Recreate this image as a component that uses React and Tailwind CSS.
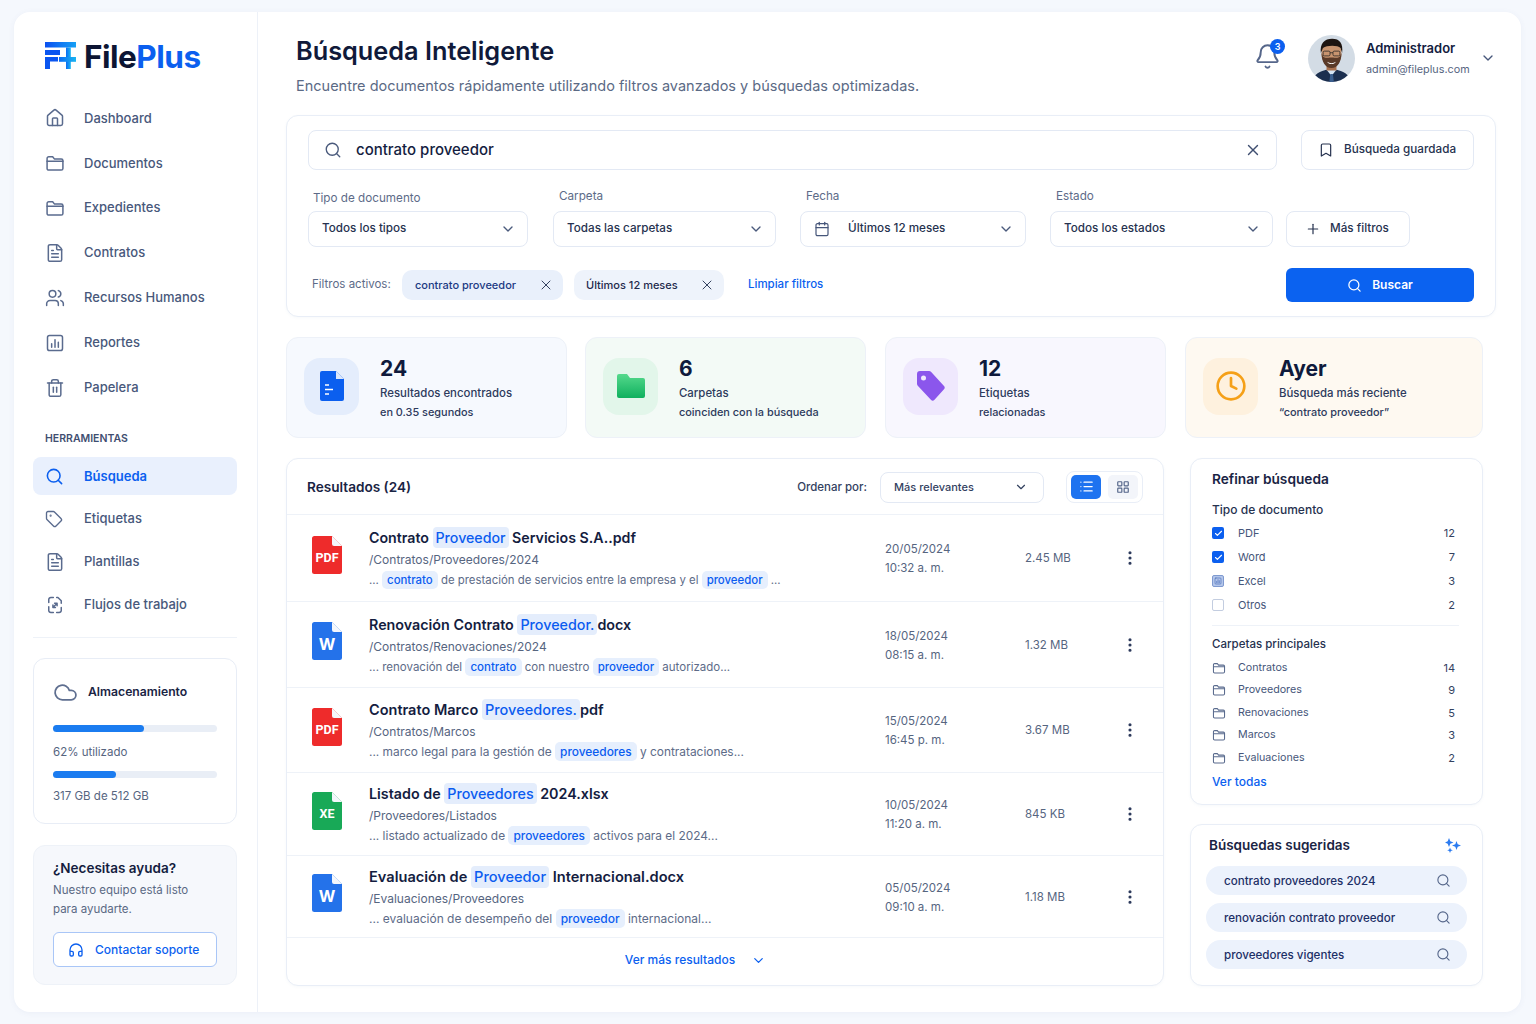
import React from 'react';
import {
  Home, FileText, Users, Trash2, Search, Tag, X, Bookmark, ChevronDown, Calendar,
  Plus, Bell, Cloud, Headphones, List, LayoutGrid, MoreVertical, Clock, Check
} from 'lucide-react';

const FolderIcon = ({ size = 20, className = '' }) => (
  <svg width={size} height={size} viewBox="0 0 24 24" fill="none" stroke="currentColor" strokeWidth="1.8" strokeLinejoin="round" strokeLinecap="round" className={className}>
    <path d="M2.5 6.5a2 2 0 0 1 2-2h4.7l2 2.6h8.3a2 2 0 0 1 2 2v9.4a2 2 0 0 1-2 2h-15a2 2 0 0 1-2-2z" />
    <path d="M2.5 10h19" />
  </svg>
);

const ReportIcon = ({ size = 20, className = '' }) => (
  <svg width={size} height={size} viewBox="0 0 24 24" fill="none" stroke="currentColor" strokeWidth="1.8" strokeLinecap="round" className={className}>
    <rect x="3" y="3" width="18" height="18" rx="2.5" />
    <path d="M8 17v-4M12 17V8M16 17v-6" />
  </svg>
);

const FlowIcon = ({ size = 20, className = '' }) => (
  <svg width={size} height={size} viewBox="0 0 24 24" fill="none" stroke="currentColor" strokeWidth="1.8" strokeLinecap="round" strokeLinejoin="round" className={className}>
    <path d="M10 3H7a2.5 2.5 0 0 0-2.5 2.5V9M4.5 14v4.5A2.5 2.5 0 0 0 7 21h3M14 21h3a2.5 2.5 0 0 0 2.5-2.5V15M19.5 10V7L15.5 3H14" />
    <path d="M9.5 15l5-5M11.5 10h3v3M9.5 12v3h3" />
  </svg>
);

const Logo = () => (
  <svg width="32" height="27" viewBox="0 0 32 27">
    <defs>
      <linearGradient id="lg1" x1="0" y1="0" x2="1" y2="0">
        <stop offset="0" stopColor="#0a4ff0" />
        <stop offset="1" stopColor="#16a0f5" />
      </linearGradient>
      <linearGradient id="lg2" x1="0" y1="0" x2="1" y2="0">
        <stop offset="0" stopColor="#0b6cf2" />
        <stop offset="1" stopColor="#19b5f2" />
      </linearGradient>
    </defs>
    <rect x="0" y="0" width="31" height="5.5" fill="url(#lg1)" />
    <rect x="0" y="8" width="15" height="5" fill="#0a55f0" />
    <rect x="0" y="15" width="13" height="4.5" fill="#0a55f0" />
    <rect x="0" y="15" width="5" height="12" fill="#0a55f0" />
    <rect x="21" y="5.5" width="4.8" height="21.5" fill="url(#lg2)" />
    <rect x="14" y="15" width="17" height="4.8" fill="url(#lg2)" />
  </svg>
);

const Avatar = () => (
  <svg width="47" height="47" viewBox="0 0 47 47" className="rounded-full shrink-0">
    <rect width="47" height="47" fill="#d3dce5" />
    <path d="M4 47c1-8 9-11 15-12.5h9C34 36 42 39 43 47z" fill="#1c2f4f" />
    <path d="M18 34l5.5 7 5.5-7-1-3h-9z" fill="#d6e5f3" />
    <path d="M22.3 39h2.6l1 8h-4.6z" fill="#3b5f8f" />
    <g transform="translate(23.5 18) scale(1.25) translate(-23.5 -19)">
      <rect x="19.5" y="26" width="8" height="7" fill="#a8714f" />
      <ellipse cx="23.5" cy="19.5" rx="8" ry="10" fill="#c8946f" />
      <path d="M15.5 19c0 7 3 12 8 12s8-5 8-12l-1.5 3c-2 1.5-3 .5-6.5 .5s-4.5 1-6.5-.5z" fill="#5a3a28" />
      <path d="M15 19c-1-8 3-11.5 9-11.5s9 3.5 8 11.5l-1.3-4c-2-2.5-11-2.5-14 0z" fill="#1e1511" />
      <path d="M20 26c2 1.5 5 1.5 7 0-1 2.5-6 2.5-7 0z" fill="#fff" />
      <g fill="none" stroke="#222" strokeWidth=".6">
        <rect x="16.8" y="17.5" width="5.5" height="3.8" rx="1" />
        <rect x="24.7" y="17.5" width="5.5" height="3.8" rx="1" />
        <path d="M22.3 18.8h2.4" />
      </g>
    </g>
  </svg>
);

const FileIcon = ({ color, label, small }) => (
  <div className="relative w-[30px] h-[38px] shrink-0 mb-[7px]">
    <svg width="30" height="38" viewBox="0 0 30 38" className="block">
      <path d="M2.5 0H20l10 10v25.5a2.5 2.5 0 0 1-2.5 2.5h-25A2.5 2.5 0 0 1 0 35.5v-33A2.5 2.5 0 0 1 2.5 0z" fill={color} />
      <path d="M20 0l10 10h-8a2 2 0 0 1-2-2z" fill="#f4f7fc" />
    </svg>
    <span className={`absolute left-0 right-0 top-[13px] text-center text-white font-bold leading-[18px] ${small ? 'text-[12.5px] font-[Roboto,sans-serif]' : 'text-[16px]'}`}>{label}</span>
  </div>
);

const navTop = [
  { label: 'Dashboard', icon: <Home size={20} strokeWidth={1.8} /> },
  { label: 'Documentos', icon: <FolderIcon /> },
  { label: 'Expedientes', icon: <FolderIcon /> },
  { label: 'Contratos', icon: <FileText size={20} strokeWidth={1.8} /> },
  { label: 'Recursos Humanos', icon: <Users size={20} strokeWidth={1.8} /> },
  { label: 'Reportes', icon: <ReportIcon /> },
  { label: 'Papelera', icon: <Trash2 size={20} strokeWidth={1.8} /> },
];

const navTools = [
  { label: 'Etiquetas', icon: <Tag size={18} strokeWidth={1.8} /> },
  { label: 'Plantillas', icon: <FileText size={20} strokeWidth={1.8} /> },
  { label: 'Flujos de trabajo', icon: <FlowIcon /> },
];

const results = [
  {
    h: 'h-[87px]', color: '#ee2b2b', label: 'PDF', small: true, titleSize: 'text-[14.2px]', snipSize: 'text-[11.4px]',
    title: ['Contrato ', 'Proveedor', ' Servicios S.A..pdf'],
    path: '/Contratos/Proveedores/2024',
    snippet: ['... ', 'contrato', ' de prestación de servicios entre la empresa y el ', 'proveedor', ' ...'],
    date: '20/05/2024', time: '10:32 a. m.', size: '2.45 MB',
  },
  {
    h: 'h-[86px]', color: '#2472ea', label: 'W', titleSize: 'text-[14.3px]', snipSize: 'text-[11.5px]',
    title: ['Renovación Contrato ', 'Proveedor.', 'docx'],
    path: '/Contratos/Renovaciones/2024',
    snippet: ['... renovación del ', 'contrato', ' con nuestro ', 'proveedor', ' autorizado...'],
    date: '18/05/2024', time: '08:15 a. m.', size: '1.32 MB',
  },
  {
    h: 'h-[85px]', color: '#ee2b2b', label: 'PDF', small: true, titleSize: 'text-[14.5px]', snipSize: 'text-[11.9px]',
    title: ['Contrato Marco ', 'Proveedores.', 'pdf'],
    path: '/Contratos/Marcos',
    snippet: ['... marco legal para la gestión de ', 'proveedores', ' y contrataciones...'],
    date: '15/05/2024', time: '16:45 p. m.', size: '3.67 MB',
  },
  {
    h: 'h-[83px]', color: '#18a957', label: 'XE', small: true, titleSize: 'text-[14.3px]', snipSize: 'text-[11.9px]',
    title: ['Listado de ', 'Proveedores', ' 2024.xlsx'],
    path: '/Proveedores/Listados',
    snippet: ['... listado actualizado de ', 'proveedores', ' activos para el 2024...'],
    date: '10/05/2024', time: '11:20 a. m.', size: '845 KB',
  },
  {
    h: 'h-[82px]', color: '#2472ea', label: 'W', titleSize: 'text-[14.6px]', snipSize: 'text-[12px]',
    title: ['Evaluación de ', 'Proveedor', ' Internacional.docx'],
    path: '/Evaluaciones/Proveedores',
    snippet: ['... evaluación de desempeño del ', 'proveedor', ' internacional...'],
    date: '05/05/2024', time: '09:10 a. m.', size: '1.18 MB',
  },
];

const docTypes = [
  { label: 'PDF', count: 12, state: 'on' },
  { label: 'Word', count: 7, state: 'on' },
  { label: 'Excel', count: 3, state: 'mixed' },
  { label: 'Otros', count: 2, state: 'off' },
];

const folders = [
  { label: 'Contratos', count: 14 },
  { label: 'Proveedores', count: 9 },
  { label: 'Renovaciones', count: 5 },
  { label: 'Marcos', count: 3 },
  { label: 'Evaluaciones', count: 2 },
];

const suggested = ['contrato proveedores 2024', 'renovación contrato proveedor', 'proveedores vigentes'];

const Select = ({ label, value, width, labelClass = '', icon }) => (
  <div className={`${width} shrink-0`}>
    <div className={`text-[11.7px] leading-4 text-[#5d6b88] ${labelClass}`}>{label}</div>
    <div className="h-[36px] border border-[#e3e9f4] rounded-lg bg-white flex items-center pl-[13px] pr-[11px] text-[11.7px] font-medium text-[#26324f]">
      {icon}
      <span className="flex-1">{value}</span>
      <ChevronDown size={16} className="text-[#4a5a7c]" />
    </div>
  </div>
);

const StatCard = ({ bg, iconBg, icon, value, line1, line2, width }) => (
  <div className={`${width} shrink-0 h-[101px] rounded-xl border border-[#edf1f8] ${bg} flex items-center pl-[17px]`}>
    <div className={`w-[55px] h-[57px] -mt-[3px] rounded-2xl ${iconBg} flex items-center justify-center shrink-0`}>{icon}</div>
    <div className="ml-[21px] mt-[3px]">
      <div className="text-[21px] leading-[26px] font-bold text-[#0f1a3c]">{value}</div>
      <div className="text-[11.4px] leading-[19px] mt-[2px] font-medium text-[#2d3a5c]">{line1}</div>
      <div className="text-[10.9px] leading-[19px] font-medium text-[#2d3a5c]">{line2}</div>
    </div>
  </div>
);

const Snippet = ({ parts, size }) => (
  <div className={`${size} leading-5 text-[#5d6b88] whitespace-pre`}>
    {parts.map((p, i) => i % 2 === 1
      ? <span key={i} className="bg-[#e6effd] text-[#0b5cf0] font-medium rounded-[5px] px-[5px] py-[2px]">{p}</span>
      : <span key={i}>{p}</span>)}
  </div>
);

export default function App() {
  return (
    <div className="h-[1024px] w-[1536px] overflow-hidden bg-[#f5f8fd] pl-[14px] pr-[15px] pt-[12px] pb-[12px] font-[Inter,sans-serif]">
      <div className="h-[1000px] bg-white rounded-2xl flex shadow-[0_1px_6px_rgba(60,90,150,0.06)]">
        {/* Sidebar */}
        <aside className="w-[244px] shrink-0 border-r border-[#edf1f8] pl-[19px] pr-[20px] pt-[30px]">
          <div className="flex items-center h-[27px] pl-[12px] gap-[7px]">
            <Logo />
            <div className="text-[31.5px] leading-none font-bold tracking-[-0.5px] text-[#0d1533] mt-[2px]">
              File<span className="text-[#0b5fef]">Plus</span>
            </div>
          </div>
          <nav className="mt-[27px]">
            {navTop.map((n) => (
              <div key={n.label} className="h-[44.9px] flex items-center pl-[12px] text-[13px] font-medium text-[#48587b]">
                <span className="w-[39px] text-[#5a6b8e]">{n.icon}</span>
                {n.label}
              </div>
            ))}
          </nav>
          <div className="mt-[21px] pl-[12px] text-[10.5px] leading-4 font-semibold text-[#3f4e70]">HERRAMIENTAS</div>
          <div className="mt-[10px] h-[38px] rounded-lg bg-[#e9f0fd] flex items-center pl-[12px] text-[13px] font-semibold text-[#0b5fef]">
            <span className="w-[39px]"><Search size={19} strokeWidth={2} /></span>
            <span className="mt-[1px]">Búsqueda</span>
          </div>
          <div className="mt-[2px]">
            {navTools.map((n) => (
              <div key={n.label} className="h-[43px] flex items-center pl-[12px] text-[13px] font-medium text-[#48587b]">
                <span className="w-[39px] text-[#5a6b8e]">{n.icon}</span>
                {n.label}
              </div>
            ))}
          </div>
          <div className="mt-[11px] border-t border-[#eef2f8]" />

          <div className="mt-[20px] h-[166px] rounded-xl border border-[#e8edf6] px-[19px] pt-[23px]">
            <div className="flex items-center h-[20px]">
              <Cloud size={25} strokeWidth={1.7} className="text-[#5f6f90]" />
              <span className="ml-[10px] text-[12.2px] font-semibold text-[#1a2444]">Almacenamiento</span>
            </div>
            <div className="mt-[23px] h-[7px] rounded-full bg-[#e9eef6]">
              <div className="h-[7px] w-[91px] rounded-full bg-[#1b7cf0]" />
            </div>
            <div className="mt-[12px] text-[11.5px] leading-4 text-[#56657f]">62% utilizado</div>
            <div className="mt-[11px] h-[7px] rounded-full bg-[#e9eef6]">
              <div className="h-[7px] w-[63px] rounded-full bg-[#1b7cf0]" />
            </div>
            <div className="mt-[10px] text-[11.5px] leading-4 text-[#56657f]">317 GB de 512 GB</div>
          </div>

          <div className="mt-[21px] h-[140px] rounded-xl border border-[#eef2f8] bg-[#f6f8fc] px-[19px] pt-[13px]">
            <div className="text-[13.5px] leading-[18px] font-semibold text-[#141d3f]">¿Necesitas ayuda?</div>
            <div className="mt-[4px] text-[11.5px] leading-[19px] text-[#5a6984]">Nuestro equipo está listo<br />para ayudarte.</div>
            <div className="mt-[13px] h-[35px] rounded-md border border-[#a9c6f7] bg-white flex items-center pl-[14px] text-[12px] font-medium text-[#0b5fef]">
              <Headphones size={16} strokeWidth={2} />
              <span className="ml-[11px]">Contactar soporte</span>
            </div>
          </div>
        </aside>

        {/* Main */}
        <main className="flex-1 min-w-0 pl-[28px] pr-[25px]">
          <header className="h-[103px] flex">
            <div className="pl-[10px] pt-[23px]">
              <h1 className="text-[25.3px] leading-8 font-semibold text-[#101a3a]">Búsqueda Inteligente</h1>
              <p className="mt-[9px] text-[14.5px] leading-5 text-[#5b6a85]">Encuentre documentos rápidamente utilizando filtros avanzados y búsquedas optimizadas.</p>
            </div>
            <div className="ml-auto flex items-start pt-[23px]">
              <div className="relative mt-[8px] mr-[27px] text-[#55668a]">
                <Bell size={27} strokeWidth={1.7} />
                <span className="absolute -top-[4px] left-[16px] w-[15px] h-[15px] rounded-full bg-[#0b5fef] text-white text-[9px] font-semibold flex items-center justify-center">3</span>
              </div>
              <Avatar />
              <div className="ml-[11px] w-[112px]">
                <div className="text-[13px] leading-4 mt-[5px] font-semibold text-[#141d3f]">Administrador</div>
                <div className="text-[10.8px] leading-4 mt-[6px] text-[#56657f]">admin@fileplus.com</div>
              </div>
              <ChevronDown size={16} className="ml-[2px] mt-[15px] text-[#46567a]" />
            </div>
          </header>

          {/* Search panel */}
          <section className="h-[202px] rounded-xl border border-[#e9eef7] bg-white px-[21px] pt-[14px] shadow-[0_1px_3px_rgba(60,90,150,0.04)]">
            <div className="flex gap-[24px]">
              <div className="w-[969px] h-[40px] border border-[#e3e9f4] rounded-lg flex items-center pl-[15px] pr-[14px]">
                <Search size={18} strokeWidth={1.8} className="text-[#4a5a7c]" />
                <span className="ml-[14px] flex-1 text-[15px] font-medium text-[#141d3f]">contrato proveedor</span>
                <X size={18} strokeWidth={1.8} className="text-[#3f4e70]" />
              </div>
              <div className="w-[173px] h-[40px] border border-[#e3e9f4] rounded-lg flex items-center pl-[16px] text-[11.7px] font-medium text-[#26324f]">
                <Bookmark size={16} strokeWidth={1.8} />
                <span className="ml-[10px]">Búsqueda guardada</span>
              </div>
            </div>
            <div className="flex items-end mt-[18px]">
              <Select width="w-[220px]" label="Tipo de documento" value="Todos los tipos" labelClass="mb-[5px] pl-[5px]" />
              <Select width="w-[223px] ml-[25px]" label="Carpeta" value="Todas las carpetas" labelClass="mb-[7px] pl-[6px]" />
              <Select
                width="w-[226px] ml-[24px]"
                label="Fecha"
                value="Últimos 12 meses"
                labelClass="mb-[7px] pl-[6px]"
                icon={<Calendar size={16} strokeWidth={1.8} className="text-[#46567a] mr-[18px]" />}
              />
              <Select width="w-[223px] ml-[24px]" label="Estado" value="Todos los estados" labelClass="mb-[7px] pl-[6px]" />
              <div className="w-[124px] h-[36px] ml-[13px] border border-[#e3e9f4] rounded-lg flex items-center pl-[18px] text-[11.7px] font-medium text-[#26324f]">
                <Plus size={16} strokeWidth={1.8} />
                <span className="ml-[9px]">Más filtros</span>
              </div>
            </div>
            <div className="flex items-center mt-[21px]">
              <span className="pl-[4px] w-[94px] text-[11.5px] text-[#5d6b88]">Filtros activos:</span>
              <div className="w-[161px] h-[30px] rounded-[10px] bg-[#e9f0fb] flex items-center pl-[13px] pr-[9px] text-[11px] font-medium text-[#1c3a83]">
                <span className="flex-1">contrato proveedor</span>
                <X size={16} strokeWidth={1.5} className="text-[#33415f]" />
              </div>
              <div className="w-[150px] h-[30px] ml-[11px] rounded-[10px] bg-[#eef3fb] flex items-center pl-[12px] pr-[9px] text-[11px] font-medium text-[#1e2a4c]">
                <span className="flex-1">Últimos 12 meses</span>
                <X size={16} strokeWidth={1.5} className="text-[#33415f]" />
              </div>
              <span className="ml-[24px] text-[11.5px] font-medium text-[#0b5fef]">Limpiar filtros</span>
              <div className="ml-auto w-[188px] h-[34px] rounded-md bg-[#0b62f0] text-white flex items-center justify-center text-[12px] font-semibold">
                <Search size={15} strokeWidth={2} />
                <span className="ml-[10px]">Buscar</span>
              </div>
            </div>
          </section>

          {/* Stat cards */}
          <div className="flex mt-[20px] gap-[18px]">
            <StatCard
              width="w-[281px]" bg="bg-[#f6f9fe]" iconBg="bg-[#e4edfc]" value="24" line1="Resultados encontrados" line2="en 0.35 segundos"
              icon={
                <svg width="24" height="30" viewBox="0 0 24 30">
                  <path d="M2 0h14l8 8v20a2 2 0 0 1-2 2H2a2 2 0 0 1-2-2V2a2 2 0 0 1 2-2z" fill="#0b5fef" />
                  <path d="M16 0l8 8h-8z" fill="#dbe7fb" />
                  <path d="M5 14h4M5 18.5h8M5 23h4" stroke="#fff" strokeWidth="1.6" />
                </svg>
              }
            />
            <StatCard
              width="w-[281px]" bg="bg-[#f3faf6]" iconBg="bg-[#e2f6ea]" value="6" line1="Carpetas" line2="coinciden con la búsqueda"
              icon={
                <svg width="28" height="24" viewBox="0 0 28 24">
                  <defs>
                    <linearGradient id="gf" x1="0" y1="0" x2="0" y2="1">
                      <stop offset="0" stopColor="#55d98c" />
                      <stop offset="1" stopColor="#0fb05e" />
                    </linearGradient>
                  </defs>
                  <path d="M2 0h8l3 4h13a2 2 0 0 1 2 2v16a2 2 0 0 1-2 2H2a2 2 0 0 1-2-2V2a2 2 0 0 1 2-2z" fill="url(#gf)" />
                </svg>
              }
            />
            <StatCard
              width="w-[281px] ml-[1px]" bg="bg-[#f8f7fe]" iconBg="bg-[#efe8fd]" value="12" line1="Etiquetas" line2="relacionadas"
              icon={
                <svg width="28" height="30" viewBox="0 0 28 30">
                  <path d="M3 0h9a3 3 0 0 1 2.2 1L27 15a2.5 2.5 0 0 1 0 3.3l-9.5 10.5a2.5 2.5 0 0 1-3.6 0L1 15a3 3 0 0 1-1-2.2V3a3 3 0 0 1 3-3z" fill="#8b56ec" />
                  <circle cx="6.5" cy="7" r="2.5" fill="#efe8fd" />
                </svg>
              }
            />
            <StatCard
              width="w-[298px] ml-[1px]" bg="bg-[#fef9f1]" iconBg="bg-[#fef1de]" value="Ayer" line1="Búsqueda más reciente" line2="“contrato proveedor”"
              icon={<Clock size={32} strokeWidth={2} className="text-[#f5a017]" />}
            />
          </div>

          <div className="flex mt-[20px]">
            {/* Results */}
            <section className="w-[878px] h-[528px] shrink-0 rounded-xl border border-[#e9eef7] bg-white shadow-[0_1px_3px_rgba(60,90,150,0.04)]">
              <div className="h-[56px] flex items-center pl-[20px] pr-[20px] border-b border-[#eef2f8]">
                <span className="mt-[2px] text-[13.6px] font-semibold text-[#1a2444]">Resultados (24)</span>
                <span className="ml-auto mt-[2px] text-[11.5px] font-medium text-[#33415f]">Ordenar por:</span>
                <div className="ml-[13px] w-[164px] h-[31px] mt-[1px] border border-[#e3e9f4] rounded-lg flex items-center pl-[13px] pr-[15px] text-[11px] font-medium text-[#33415f]">
                  <span className="flex-1">Más relevantes</span>
                  <ChevronDown size={14} />
                </div>
                <div className="ml-[22px] w-[77px] h-[32px] border border-[#e9eef7] rounded-lg flex items-center gap-[6px] p-[3px]">
                  <div className="w-[30px] h-[24px] mx-[1px] rounded-[5px] bg-[#1e73f0] flex items-center justify-center text-white"><List size={15} /></div>
                  <div className="w-[30px] h-[24px] rounded-[5px] bg-[#f3f5fa] flex items-center justify-center text-[#55668a]"><LayoutGrid size={14} /></div>
                </div>
              </div>
              {results.map((r) => (
                <div key={r.path} className={`${r.h} flex items-center pl-[25px] border-b border-[#eef2f8]`}>
                  <FileIcon color={r.color} label={r.label} small={r.small} />
                  <div className="w-[516px] shrink-0 ml-[27px] pt-[2px]">
                    <div className={`${r.titleSize} leading-5 font-semibold text-[#141d3f] whitespace-pre`}>
                      {r.title[0]}
                      <span className="bg-[#e4edfc] text-[#0b5cf0] font-medium rounded-[4px] px-[3px] py-[2px]">{r.title[1]}</span>
                      {r.title[2]}
                    </div>
                    <div className="mt-[2px] text-[12px] leading-5 text-[#56657f]">{r.path}</div>
                    <Snippet parts={r.snippet} size={r.snipSize} />
                  </div>
                  <div className="w-[140px] shrink-0 mt-[2px] text-[11.5px] leading-[19px] text-[#56657f]">
                    {r.date}<br />{r.time}
                  </div>
                  <div className="w-[96px] shrink-0 mt-[2px] text-[11.5px] text-[#56657f]">{r.size}</div>
                  <MoreVertical size={18} strokeWidth={2.2} className="text-[#2d3a5c]" />
                </div>
              ))}
              <div className="h-[48px] flex items-center justify-center pr-[59px] pb-[4px] text-[12px] font-medium text-[#0b5fef]">
                Ver más resultados
                <ChevronDown size={15} className="ml-[16px]" />
              </div>
            </section>

            {/* Right column */}
            <div className="w-[293px] ml-[26px] shrink-0">
              <section className="h-[347px] rounded-xl border border-[#e9eef7] bg-white pl-[21px] pr-[27px] pt-[11px] shadow-[0_1px_3px_rgba(60,90,150,0.04)]">
                <div className="text-[13.7px] leading-[18px] font-semibold text-[#1a2444]">Refinar búsqueda</div>
                <div className="mt-[14px] text-[12px] leading-4 font-medium text-[#26324f]">Tipo de documento</div>
                <div className="mt-[3px]">
                  {docTypes.map((d) => (
                    <div key={d.label} className="h-[24px] flex items-center text-[11px] text-[#46567a]">
                      {d.state === 'on' && (
                        <span className="w-[12px] h-[12px] rounded-[2px] bg-[#0b5fef] text-white flex items-center justify-center"><Check size={9} strokeWidth={3} /></span>
                      )}
                      {d.state === 'mixed' && (
                        <span className="w-[12px] h-[12px] rounded-[2px] bg-[#b4c6ea] border border-[#7f9ad0] flex items-center justify-center text-[#3f66b5]"><ReportIcon size={8} /></span>
                      )}
                      {d.state === 'off' && <span className="w-[12px] h-[12px] rounded-[2px] border border-[#c3cde0] bg-white" />}
                      <span className="ml-[14px] flex-1">{d.label}</span>
                      <span className="text-[#33415f]">{d.count}</span>
                    </div>
                  ))}
                </div>
                <div className="mt-[8px] border-t border-[#eef2f8] w-[247px]" />
                <div className="mt-[10px] text-[11.5px] leading-4 font-medium text-[#26324f]">Carpetas principales</div>
                <div className="mt-[4.5px]">
                  {folders.map((f) => (
                    <div key={f.label} className="h-[22.5px] flex items-center text-[10.7px] text-[#46567a]">
                      <FolderIcon size={14} className="text-[#5a6b8e]" />
                      <span className="ml-[12px] flex-1">{f.label}</span>
                      <span className="text-[11px] text-[#33415f]">{f.count}</span>
                    </div>
                  ))}
                </div>
                <div className="mt-[4.5px] text-[12px] leading-4 font-medium text-[#0b5fef]">Ver todas</div>
              </section>

              <section className="mt-[19px] h-[162px] rounded-xl border border-[#e9eef7] bg-white pl-[15px] pr-[15px] pt-[11px] shadow-[0_1px_3px_rgba(60,90,150,0.04)]">
                <div className="flex items-center pl-[3px] pr-[6px] h-[18px]">
                  <span className="flex-1 text-[13.5px] font-semibold text-[#1a2444]">Búsquedas sugeridas</span>
                  <svg width="16" height="15" viewBox="0 0 16 15" fill="#2b7bf0">
                    <path d="M4 0l1.3 3.2L8.5 4.5 5.3 5.8 4 9 2.7 5.8 0 4.5l2.7-1.300zM11.5 3l1.2 3.3L16 7.5l-3.3 1.2-1.2 3.3-1.2-3.3L7 7.5l3.3-1.2zM5 9.5l.8 2 2 .8-2 .8-.8 1.9-.8-1.9-2-.8 2-.8z" />
                  </svg>
                </div>
                <div className="mt-[12px] flex flex-col gap-[8px]">
                  {suggested.map((s) => (
                    <div key={s} className="h-[29px] rounded-full bg-[#ecf2fc] flex items-center pl-[18px] pr-[16px] text-[11.6px] font-medium text-[#1c2f66]">
                      <span className="flex-1 mt-[2px]">{s}</span>
                      <Search size={15} strokeWidth={1.8} className="text-[#55668a]" />
                    </div>
                  ))}
                </div>
              </section>
            </div>
          </div>
        </main>
      </div>
    </div>
  );
}
